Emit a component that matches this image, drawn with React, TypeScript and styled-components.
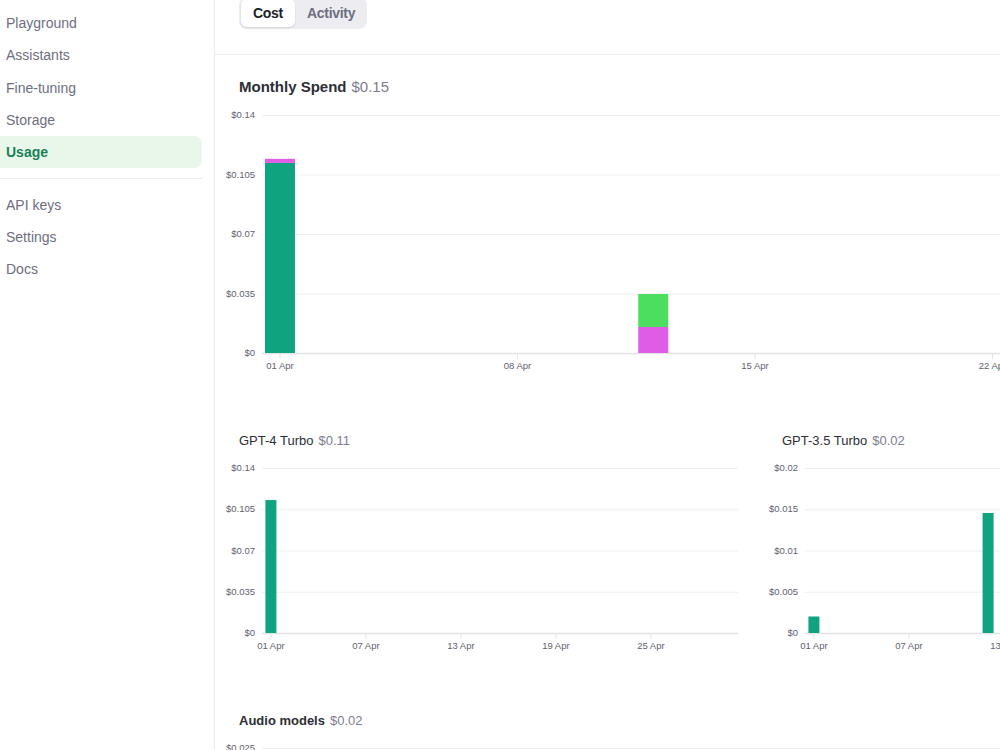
import React from "react";
import styled, { createGlobalStyle } from "styled-components";

const GlobalStyle = createGlobalStyle`
  html, body {
    margin: 0;
    padding: 0;
    background: #ffffff;
    font-family: "Liberation Sans", Arial, sans-serif;
    overflow: hidden;
  }
  * { box-sizing: border-box; }
`;

const TEAL = "#10a37f";
const LIME = "#4cdf5f";
const MAGENTA = "#de5ce6";

const Page = styled.div`
  display: flex;
  height: 100vh;
  overflow: hidden;
`;

const Sidebar = styled.aside`
  width: 215px;
  flex-shrink: 0;
  border-right: 1px solid #ececf1;
  padding: 7px 12px 0 0;
`;

const NavList = styled.nav`
  display: flex;
  flex-direction: column;
  margin-left: -10px;
`;

const NavItem = styled.a<{ $active?: boolean }>`
  display: flex;
  align-items: center;
  height: 32.3px;
  padding-left: 16px;
  border-radius: 8px;
  font-size: 14px;
  text-decoration: none;
  color: ${(p) => (p.$active ? "#1a7f5a" : "#6e6e80")};
  font-weight: ${(p) => (p.$active ? 700 : 400)};
  background: ${(p) => (p.$active ? "#e8f7ea" : "transparent")};
  cursor: pointer;
`;

const NavDivider = styled.hr`
  border: none;
  border-top: 1px solid #ececf1;
  margin: 10px 0 9px 0;
  height: 0;
`;

const Main = styled.main`
  flex: 1;
  min-width: 0;
  overflow: hidden;
`;

const Header = styled.header`
  height: 55px;
  border-bottom: 1px solid #ececf1;
  padding: 0 24px;
  display: flex;
  align-items: flex-start;
`;

const Segmented = styled.div`
  display: flex;
  margin-top: -3px;
  padding: 2px;
  background: #ececf1;
  border-radius: 8px;
`;

const SegButton = styled.button<{ $selected?: boolean }>`
  height: 28px;
  border: none;
  border-radius: 6px;
  padding: 0 12px;
  font-family: inherit;
  font-size: 14px;
  font-weight: 700;
  letter-spacing: -0.3px;
  color: ${(p) => (p.$selected ? "#202123" : "#6e6e80")};
  background: ${(p) => (p.$selected ? "#ffffff" : "transparent")};
  box-shadow: ${(p) => (p.$selected ? "0 1px 2px rgba(0,0,0,0.12)" : "none")};
  cursor: pointer;
  &:first-child { width: 54px; }
  &:last-child { width: 70px; }
`;

const Content = styled.div`
  width: 1086px;
  padding: 22px 0 0 24px;
  display: flex;
  flex-direction: column;
  gap: 55px;
`;

const Section = styled.section`
  display: flex;
  flex-direction: column;
  gap: 13px;
`;

const Title = styled.h2<{ $large?: boolean; $weight?: number }>`
  margin: 0;
  font-size: ${(p) => (p.$large ? "15px" : "13px")};
  line-height: ${(p) => (p.$large ? "20px" : "18px")};
  font-weight: ${(p) => p.$weight ?? 400};
  color: #2d2e36;
  display: flex;
  gap: 5px;
`;

const Amount = styled.span`
  font-weight: 400;
  color: #7d7d8e;
`;

const Grid = styled.div`
  display: grid;
  grid-template-columns: 519px 519px;
  column-gap: 24px;
`;

const ChartSvg = styled.svg`
  display: block;
  margin-left: -24px;
  overflow: visible;
`;

const AxisText = styled.text`
  font-family: "Liberation Sans", Arial, sans-serif;
  font-size: 9.5px;
  fill: #5f5f70;
`;

type Segment = { value: number; color: string };
type Bar = { day: number; segments: Segment[] };

type ChartProps = {
  width: number;
  plotHeight: number;
  yMax: number;
  yLabels: string[];
  xDays: number[];
  barWidth: number;
  bars: Bar[];
};

const DAYS = 30;
const PLOT_LEFT = 48;
const PLOT_TOP = 5;

function BarChart({ width, plotHeight, yMax, yLabels, xDays, barWidth, bars }: ChartProps) {
  const right = width - 20;
  const band = (right - PLOT_LEFT) / DAYS;
  const baseY = PLOT_TOP + plotHeight;
  const height = baseY + 24;
  const steps = yLabels.length - 1;
  const scale = (v: number) => (v / yMax) * plotHeight;

  return (
    <ChartSvg width={width} height={height} viewBox={`0 0 ${width} ${height}`}>
      {yLabels.map((label, i) => {
        const y = baseY - (plotHeight * i) / steps;
        return (
          <g key={label}>
            <line
              x1={PLOT_LEFT - 1}
              x2={right}
              y1={y + 0.5}
              y2={y + 0.5}
              stroke={i === 0 ? "#e4e4e7" : "#efeff1"}
              strokeWidth={i === 0 ? 1.5 : 1}
            />
            <AxisText x={40} y={y + 0.5} textAnchor="end" dominantBaseline="middle">
              {label}
            </AxisText>
          </g>
        );
      })}
      {bars.map((bar) => {
        const cx = PLOT_LEFT + (bar.day - 0.5) * band;
        let acc = 0;
        return (
          <g key={bar.day}>
            {bar.segments.map((s, j) => {
              const h = scale(s.value);
              const y = baseY - scale(acc) - h;
              acc += s.value;
              return (
                <rect key={j} x={cx - barWidth / 2} y={y} width={barWidth} height={h} fill={s.color} />
              );
            })}
          </g>
        );
      })}
      {xDays.map((d) => {
        const cx = PLOT_LEFT + (d - 0.5) * band;
        return (
          <g key={d}>
            <line x1={cx} x2={cx} y1={baseY + 1} y2={baseY + 6} stroke="#e4e4e7" strokeWidth={1} />
            <AxisText x={cx} y={baseY + 15.5} textAnchor="middle">
              {`${String(d).padStart(2, "0")} Apr`}
            </AxisText>
          </g>
        );
      })}
    </ChartSvg>
  );
}

const navTop = ["Playground", "Assistants", "Fine-tuning", "Storage", "Usage"];
const navBottom = ["API keys", "Settings", "Docs"];

export default function App() {
  return (
    <>
      <GlobalStyle />
      <Page>
        <Sidebar>
          <NavList>
            {navTop.map((item) => (
              <NavItem key={item} $active={item === "Usage"}>
                {item}
              </NavItem>
            ))}
            <NavDivider />
            {navBottom.map((item) => (
              <NavItem key={item}>{item}</NavItem>
            ))}
          </NavList>
        </Sidebar>
        <Main>
          <Header>
            <Segmented>
              <SegButton $selected>Cost</SegButton>
              <SegButton>Activity</SegButton>
            </Segmented>
          </Header>
          <Content>
            <Section>
              <Title $large $weight={700}>
                Monthly Spend <Amount>$0.15</Amount>
              </Title>
              <BarChart
                width={1086}
                plotHeight={238}
                yMax={0.14}
                yLabels={["$0", "$0.035", "$0.07", "$0.105", "$0.14"]}
                xDays={[1, 8, 15, 22, 29]}
                barWidth={30}
                bars={[
                  {
                    day: 1,
                    segments: [
                      { value: 0.1118, color: TEAL },
                      { value: 0.0024, color: MAGENTA },
                    ],
                  },
                  {
                    day: 12,
                    segments: [
                      { value: 0.0153, color: MAGENTA },
                      { value: 0.0194, color: LIME },
                    ],
                  },
                ]}
              />
            </Section>
            <Grid>
              <Section>
                <Title $weight={400}>
                  GPT-4 Turbo <Amount>$0.11</Amount>
                </Title>
                <BarChart
                  width={543}
                  plotHeight={165}
                  yMax={0.14}
                  yLabels={["$0", "$0.035", "$0.07", "$0.105", "$0.14"]}
                  xDays={[1, 7, 13, 19, 25]}
                  barWidth={11}
                  bars={[{ day: 1, segments: [{ value: 0.1128, color: TEAL }] }]}
                />
              </Section>
              <Section>
                <Title $weight={400}>
                  GPT-3.5 Turbo <Amount>$0.02</Amount>
                </Title>
                <BarChart
                  width={543}
                  plotHeight={165}
                  yMax={0.02}
                  yLabels={["$0", "$0.005", "$0.01", "$0.015", "$0.02"]}
                  xDays={[1, 7, 13, 19, 25]}
                  barWidth={11}
                  bars={[
                    { day: 1, segments: [{ value: 0.002, color: TEAL }] },
                    { day: 12, segments: [{ value: 0.01455, color: TEAL }] },
                  ]}
                />
              </Section>
            </Grid>
            <Section>
              <Title $weight={700}>
                Audio models <Amount>$0.02</Amount>
              </Title>
              <BarChart
                width={1086}
                plotHeight={165}
                yMax={0.025}
                yLabels={["$0", "$0.00625", "$0.0125", "$0.01875", "$0.025"]}
                xDays={[1, 8, 15, 22, 29]}
                barWidth={30}
                bars={[{ day: 12, segments: [{ value: 0.0153, color: MAGENTA }] }]}
              />
            </Section>
          </Content>
        </Main>
      </Page>
    </>
  );
}
